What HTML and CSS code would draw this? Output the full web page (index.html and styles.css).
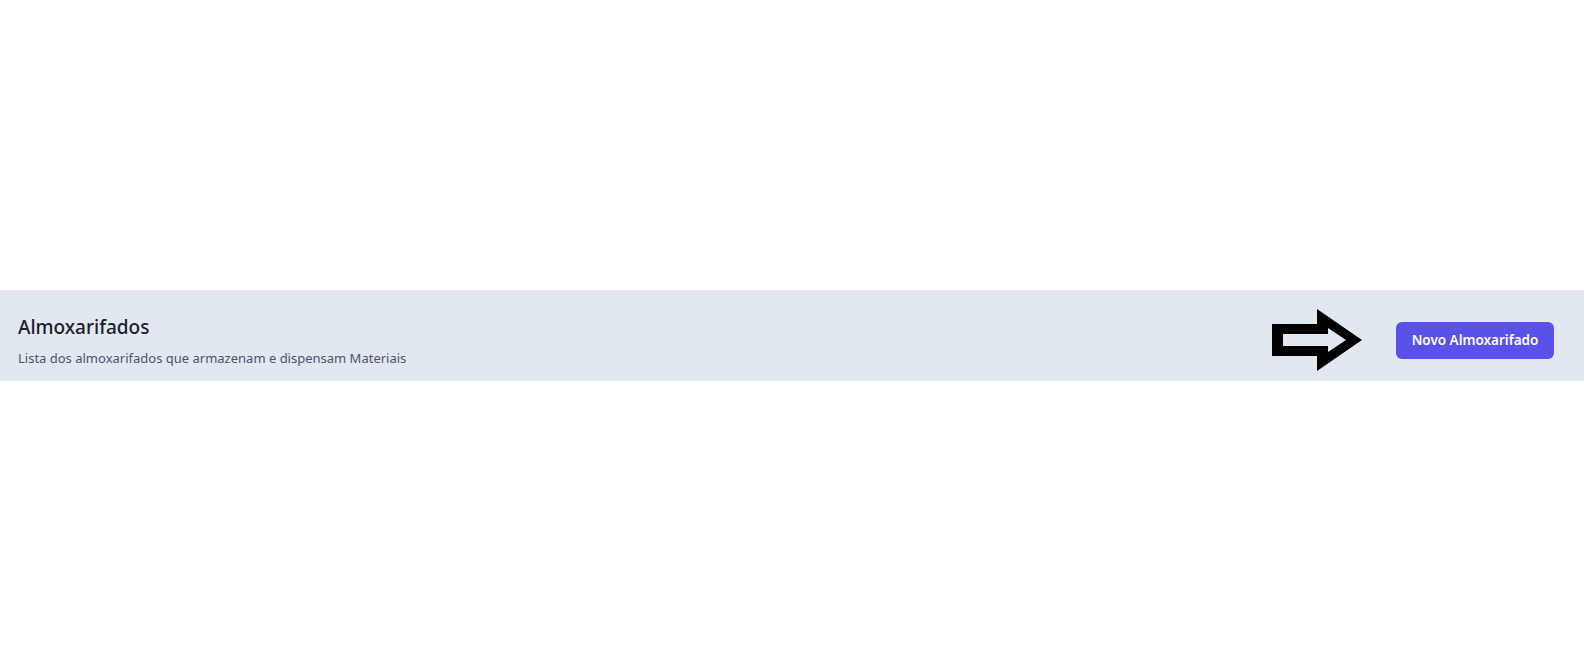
FILE: index.html
```html
<!DOCTYPE html>
<html lang="pt">
<head>
<meta charset="utf-8">
<title>Almoxarifados</title>
<link rel="stylesheet" href="styles.css">
</head>
<body>
  <div class="page">
    <header class="band">
      <div class="heading">
        <h1 class="title">Almoxarifados</h1>
        <p class="subtitle">Lista dos almoxarifados que armazenam e dispensam Materiais</p>
      </div>
      <div class="actions">
        <svg class="arrow" width="90" height="62" viewBox="1272 310 90 62" aria-hidden="true">
          <path fill="#000" fill-rule="evenodd" d="M1272 325 L1317 325 L1317 310 L1362 341 L1317 372 L1317 357 L1272 357 Z M1283 335 L1328 335 L1328 329 L1346 341 L1328 353 L1328 347 L1283 347 Z"/>
        </svg>
        <button class="btn" type="button">Novo Almoxarifado</button>
      </div>
    </header>
  </div>
</body>
</html>
```
FILE: styles.css
```css
html, body {
  margin: 0;
  padding: 0;
  background: #ffffff;
}
body {
  font-family: "Noto Sans", "Open Sans", "Liberation Sans", sans-serif;
}
.page {
  padding-top: 290px;
}
.band {
  display: flex;
  align-items: center;
  justify-content: space-between;
  background: #e2e8f0;
  padding: 22px 30px 13px 18px;
  height: 56px;
}
.heading {
  display: flex;
  flex-direction: column;
}
.title {
  margin: 0;
  font-size: 19px;
  line-height: 28px;
  font-weight: 500;
  color: #1a202c;
}
.subtitle {
  margin: 7px 0 0 0;
  font-size: 13px;
  line-height: 20px;
  color: #4a5568;
}
.actions {
  display: flex;
  align-items: center;
  gap: 34px;
}
.arrow {
  display: block;
}
.btn {
  width: 158px;
  height: 37px;
  border: 0;
  border-radius: 6px;
  background: #5a50ea;
  color: #ffffff;
  font-family: "Noto Sans", "Open Sans", "Liberation Sans", sans-serif;
  font-size: 13.5px;
  font-weight: 600;
  padding: 0;
  cursor: pointer;
}
```
